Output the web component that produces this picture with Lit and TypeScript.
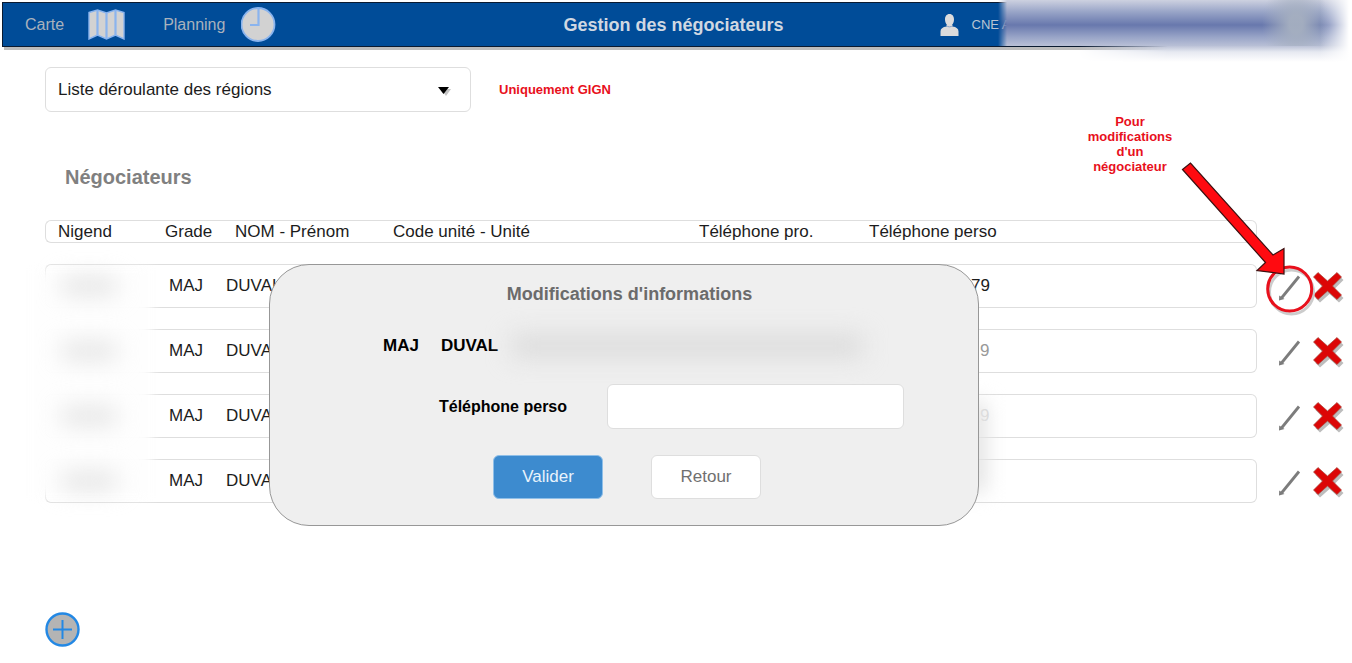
import { LitElement, html, css } from "lit";
import { customElement, state } from "lit/decorators.js";

interface Negotiator {
  grade: string;
  name: string;
  phone: string;
  tone: string;
}

@customElement("app-root")
export class AppRoot extends LitElement {
  @state() private rows: Negotiator[] = [
    { grade: "MAJ", name: "DUVAL", phone: "79", tone: "" },
    { grade: "MAJ", name: "DUVAL", phone: "9", tone: "soft" },
    { grade: "MAJ", name: "DUVAL", phone: "9", tone: "faint" },
    { grade: "MAJ", name: "DUVAL", phone: "", tone: "" },
  ];

  static styles = css`
    :host {
      display: block;
      position: relative;
      overflow: hidden;
      background: #fff;
      color: #1c1c1c;
      font: 17px/20px "Liberation Sans", Arial, sans-serif;
    }
    * { box-sizing: border-box; }
    button, input, select { font: inherit; color: inherit; margin: 0; }
    button { cursor: pointer; }
    svg { display: block; }

    .bar {
      display: grid;
      grid-template-columns: 1fr auto 1fr;
      align-items: center;
      height: 45px;
      margin: 2px 0 0 2px;
      padding: 0 29px 0 22px;
      background: #004c98;
      border: 1px solid #0a1a30;
      box-shadow: 2px 3px 0 #bcbcbc;
      font-size: 16px;
    }
    .nav { display: flex; gap: 38px; }
    .nav a {
      display: flex;
      align-items: center;
      gap: 24px;
      color: #a9b2bd;
      text-decoration: none;
    }
    .nav a + a { gap: 16px; }
    .title { margin: 0; font-size: 18px; line-height: 20px; color: #d0d8e2; }
    .user {
      display: flex;
      align-items: center;
      gap: 13px;
      padding-left: 156px;
      font-size: 13px;
      color: #b9c4d2;
      white-space: nowrap;
    }
    .mask { position: absolute; pointer-events: none; }
    .mask-user {
      top: 0;
      left: calc(50% + 322px);
      right: 0;
      height: 72px;
      overflow: hidden;
    }
    .mask-user::before,
    .mask-user::after {
      content: "";
      position: absolute;
      left: 0;
      right: 0;
    }
    .mask-user::before {
      top: 0;
      height: 46px;
      background:
        linear-gradient(270deg, #fff 3px, rgba(255, 255, 255, 0) 32px),
        radial-gradient(ellipse 34px 46px at 298px 24px, rgba(165, 175, 192, 0.95) 20%, rgba(165, 175, 192, 0)),
        linear-gradient(#cdd1e0 0, #98a4c7 12px, #6878ad 25px, #98a4c7 37px, #b9c0d6 46px);
      -webkit-mask-image: linear-gradient(90deg, transparent, #000 9px);
      mask-image: linear-gradient(90deg, transparent, #000 9px);
    }
    .mask-user::after {
      top: 46px;
      height: 22px;
      background:
        linear-gradient(270deg, #fff 3px, rgba(255, 255, 255, 0) 32px),
        linear-gradient(#bcc2d7 0, #e6e9f1 6px, #fff 16px);
      -webkit-mask-image: linear-gradient(90deg, transparent 80px, #000 170px);
      mask-image: linear-gradient(90deg, transparent 80px, #000 170px);
    }

    .page { position: relative; padding-left: 45px; }
    .filter { display: flex; align-items: center; gap: 28px; padding-top: 20px; }
    .pick { position: relative; width: 426px; }
    .pick select {
      appearance: none;
      display: block;
      width: 100%;
      height: 45px;
      padding: 0 40px 0 12px;
      background: #fff;
      border: 1px solid #dedede;
      border-radius: 6px;
    }
    .pick svg { position: absolute; right: 19px; top: 18px; pointer-events: none; }
    .note { margin: 0; color: #e8101c; font-size: 13px; line-height: 15px; font-weight: bold; }
    h2 { margin: 0; padding: 54px 0 0 20px; font-size: 20px; line-height: 22px; color: #808080; }

    table {
      width: 100%;
      margin-top: 11px;
      table-layout: fixed;
      border-collapse: separate;
      border-spacing: 0 21px;
    }
    .c-id { width: 107px; }
    .c-grade { width: 70px; }
    .c-name { width: 158px; }
    .c-unit { width: 306px; }
    .c-pro { width: 170px; }
    .c-act { width: 95px; }
    th, td {
      padding: 0;
      text-align: left;
      font-weight: normal;
      white-space: nowrap;
      border: 0 solid #dedede;
      border-width: 1px 0;
    }
    th { height: 23px; padding-left: 13px; line-height: 20px; }
    th.first { padding-left: 12px; }
    tbody td { height: 44px; }
    .first { border-left-width: 1px; border-radius: 6px 0 0 6px; }
    .last { border-right-width: 1px; border-radius: 0 6px 6px 0; }
    .grade { padding-left: 17px; }
    .name { padding-left: 4px; }
    .phone { padding-left: 115px; }
    .soft { padding-left: 124px; color: #999; }
    .faint { padding-left: 124px; color: #d4d4d4; }
    .act { border: 0; }
    .tools { display: flex; align-items: center; padding: 2px 0 0 18px; gap: 6px; }
    .tools button { padding: 0; border: 0; background: none; }
    .smudge {
      display: block;
      width: 54px;
      height: 14px;
      margin-left: 16px;
      position: relative;
      z-index: 2;
      background: #dcdcdc;
      filter: blur(12px);
    }
    .mask-ids {
      left: 30px;
      top: 222px;
      width: 122px;
      height: 228px;
      background: rgba(254, 254, 254, 0.95);
      filter: blur(6px);
      z-index: 1;
    }
    .mask-edge {
      left: calc(50% + 285px);
      top: 355px;
      width: 26px;
      height: 90px;
      background: #e4e4e4;
      filter: blur(10px);
    }

    .dialog {
      position: absolute;
      z-index: 3;
      top: 217px;
      left: calc(50% - 407px);
      width: 710px;
      height: 262px;
      padding: 19px 0 0;
      background: #efefef;
      border: 1px solid #979797;
      border-radius: 40px;
      color: #000;
    }
    .dialog h3 { margin: 0; text-align: center; font-size: 18px; line-height: 20px; color: #6b6b6b; padding-left: 11px; }
    .who { display: flex; align-items: center; gap: 22px; height: 26px; margin: 29px 0 0 113px; font-weight: bold; }
    .who .blurred { width: 350px; height: 20px; margin-left: -8px; background: #d9d9d9; filter: blur(12px); }
    .field { display: flex; align-items: center; gap: 40px; margin: 25px 0 0 169px; }
    .field label { font-size: 16px; font-weight: bold; }
    .field input {
      width: 297px;
      height: 45px;
      padding: 0 12px;
      background: #fff;
      border: 1px solid #dedede;
      border-radius: 6px;
    }
    .buttons { display: flex; gap: 48px; margin: 26px 0 0 223px; }
    .buttons button {
      width: 110px;
      height: 44px;
      padding: 0;
      border: 1px solid #dedede;
      border-radius: 6px;
      background: #fff;
      color: #707070;
    }
    .buttons .primary { background: #3d8bcf; border-color: #8fbfe8; color: #e8f3fc; }

    .callout { position: absolute; z-index: 4; top: 67px; right: 179px; width: 86px; text-align: center; }
    .pointer { position: absolute; z-index: 4; top: 113px; right: 32px; pointer-events: none; }
    .add { display: block; margin-top: 88px; padding: 0; border: 0; background: none; }
  `;

  private map() {
    return html`<svg width="37" height="31" viewBox="0 0 37 31" aria-hidden="true">
      <path d="M1 3.500 9.500 1 18.500 4 27.500 1 36 3.500V30l-8.500-4-9 4-9-4L1 30z" fill="#d2d2d2" stroke="#8ab4ee" stroke-width="1.4"/>
      <path d="M9.500 1v25M18.500 4v26M27.500 1v25" fill="none" stroke="#8ab4ee" stroke-width="2.200"/>
    </svg>`;
  }

  private clock() {
    return html`<svg width="36" height="36" viewBox="0 0 36 36" aria-hidden="true">
      <circle cx="17" cy="17.500" r="16.5" fill="#d2d2d2" stroke="#8ab4ee" stroke-width="1.800"/>
      <path d="M17.500 2v16H9" fill="none" stroke="#8ab4ee" stroke-width="2.200"/>
    </svg>`;
  }

  private tools() {
    return html`<div class="tools">
      <button aria-label="Modifier"><svg width="30" height="30" viewBox="0 0 30 30">
        <path d="M24 4.500 6.500 26" stroke="#7c7c7c" stroke-width="2.800"/>
        <path d="M4 28.500 4.200 23.500 9.500 27z" fill="#7c7c7c"/>
      </svg></button>
      <button aria-label="Supprimer"><svg width="34" height="34" viewBox="0 0 34 34">
        <path d="M7 2.500 16.500 11 26 2.500 30.500 7 21.500 16 30.500 25 26 29.500 16.500 21 7 29.500 2.500 25 11.500 16 2.500 7z" fill="#bdbdbd" transform="translate(2 3)"/>
        <path d="M7 2.500 16.500 11 26 2.500 30.500 7 21.500 16 30.500 25 26 29.500 16.500 21 7 29.500 2.500 25 11.500 16 2.500 7z" fill="#dc0606" stroke="#a8483c" stroke-width=".7"/>
      </svg></button>
    </div>`;
  }

  render() {
    return html`
      <header class="bar">
        <nav class="nav">
          <a href="#carte">Carte ${this.map()}</a>
          <a href="#planning">Planning ${this.clock()}</a>
        </nav>
        <h1 class="title">Gestion des négociateurs</h1>
        <div class="user">
          <svg width="19" height="24" viewBox="0 0 19 24" aria-hidden="true">
            <path d="M9.500 1c3 0 4.500 2.400 4.500 5.500 0 2.600-1 4.500-2 5.500l.3 1.500c4.200.5 6.200 2.200 6.200 5V23H.5v-4.500c0-2.800 2-4.500 6.200-5L7 12C6 11 5 9.100 5 6.500 5 3.400 6.500 1 9.500 1z" fill="#dcdcdc"/>
            <path d="M6 12.500c2 1.800 5 1.800 7 0" fill="none" stroke="#8aa4c8"/>
          </svg>
          <span>CNE A</span>
        </div>
      </header>
      <div class="mask mask-user"></div>

      <main class="page">
        <div class="filter">
          <div class="pick">
            <select aria-label="Régions"><option>Liste déroulante des régions</option></select>
            <svg width="15" height="12" viewBox="0 0 15 12" aria-hidden="true">
              <path d="M4 4h10L9 11z" fill="#c4c4c4"/><path d="M1 2h11L6.500 9z" fill="#000"/>
            </svg>
          </div>
          <p class="note">Uniquement GIGN</p>
        </div>

        <h2>Négociateurs</h2>
        <table>
          <colgroup>
            <col class="c-id"><col class="c-grade"><col class="c-name"><col class="c-unit"><col class="c-pro"><col><col class="c-act">
          </colgroup>
          <thead><tr>
            <th class="first">Nigend</th><th>Grade</th><th>NOM - Prénom</th><th>Code unité - Unité</th>
            <th>Téléphone pro.</th><th class="last">Téléphone perso</th><td class="act"></td>
          </tr></thead>
          <tbody>
            ${this.rows.map((r) => html`<tr>
              <td class="first"><span class="smudge"></span></td>
              <td class="grade">${r.grade}</td>
              <td class="name">${r.name}</td>
              <td></td><td></td>
              <td class="last phone ${r.tone}">${r.phone}</td>
              <td class="act">${this.tools()}</td>
            </tr>`)}
          </tbody>
        </table>
        <div class="mask mask-ids"></div>
        <div class="mask mask-edge"></div>

        <button class="add" aria-label="Ajouter"><svg width="36" height="36" viewBox="0 0 36 36">
          <circle cx="17.500" cy="17.500" r="16" fill="#b4b4b4" stroke="#2388e4" stroke-width="2.400"/>
          <path d="M17.500 8v19M8 17.500h19" stroke="#2388e4" stroke-width="2"/>
        </svg></button>

        <form class="dialog" role="dialog" aria-labelledby="dlg" @submit=${(e: Event) => e.preventDefault()}>
          <h3 id="dlg">Modifications d'informations</h3>
          <div class="who"><span>MAJ</span><span>DUVAL</span><span class="blurred"></span></div>
          <div class="field"><label for="tel">Téléphone perso</label><input id="tel" type="tel"></div>
          <div class="buttons"><button class="primary" type="submit">Valider</button><button type="button">Retour</button></div>
        </form>

        <p class="note callout">Pour modifications d'un négociateur</p>
        <svg class="pointer" width="150" height="160" viewBox="0 0 150 160" aria-hidden="true">
          <circle cx="121.500" cy="132" r="22" fill="none" stroke="#ccc" stroke-width="3"/>
          <circle cx="119.700" cy="129" r="22" fill="none" stroke="#e8101c" stroke-width="3"/>
          <path d="M12.500 9.500 20.500 3 103 95 114 88.500 114 114 87 110.500 95.500 102.500z" fill="#ff0a10" stroke="#3c1010" stroke-width="1.200"/>
        </svg>
      </main>
    `;
  }
}
